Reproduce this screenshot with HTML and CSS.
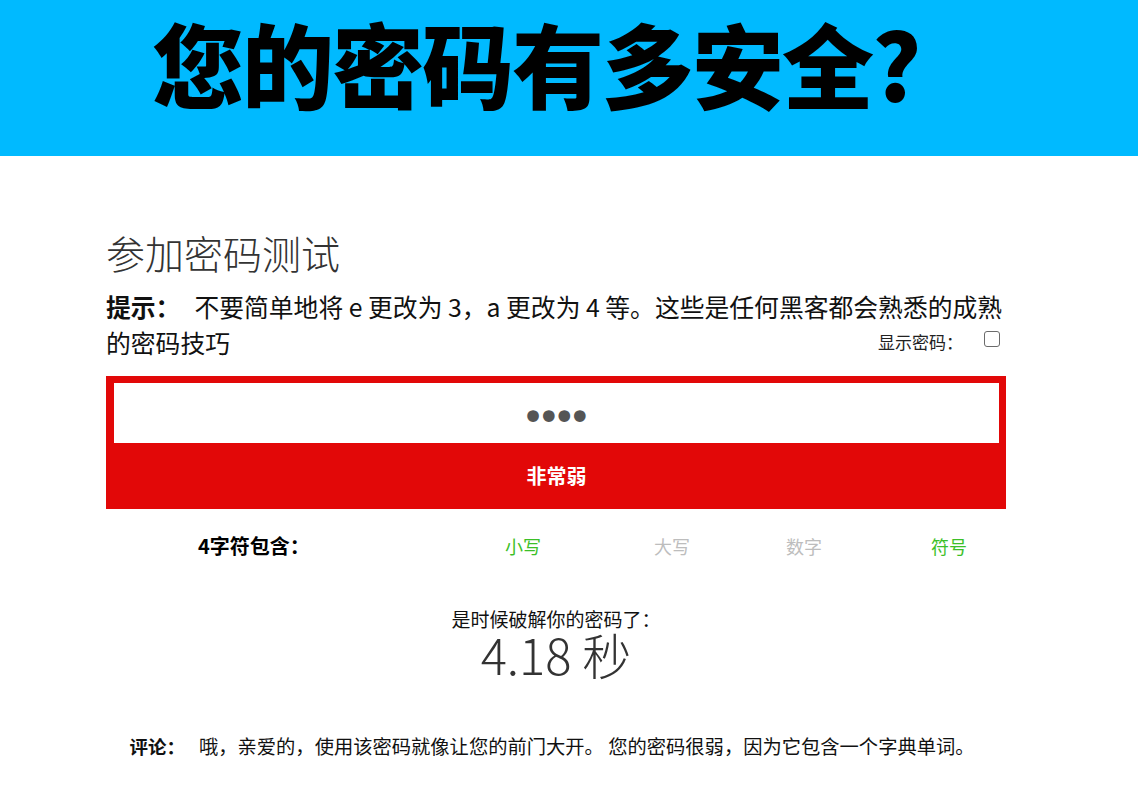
FILE: index.html
```html
<!DOCTYPE html>
<html lang="zh-CN">
<head>
<meta charset="utf-8">
<title>您的密码有多安全？</title>
<link rel="stylesheet" href="styles.css">
</head>
<body>
<header class="banner">
  <h1 class="banner-title">您的密码有多安全?</h1>
</header>
<main class="main">
  <h2 class="test-title">参加密码测试</h2>
  <p class="hint"><strong class="hint-label">提示：</strong>不要简单地将 e 更改为 3，a 更改为 4 等。这些是任何黑客都会熟悉的成熟的密码技巧<span class="toggle"><label class="toggle-label" for="show">显示密码：</label><input class="toggle-box" type="checkbox" id="show"></span></p>
  <div class="meter">
    <input class="pw-input" type="password" value="abcd" aria-label="密码">
    <div class="meter-label">非常弱</div>
  </div>
  <div class="chars">
    <span class="chars-label">4字符包含：</span>
    <span class="chars-item on">小写</span>
    <span class="chars-item off">大写</span>
    <span class="chars-item off">数字</span>
    <span class="chars-item on">符号</span>
  </div>
  <div class="crack">
    <div class="crack-label">是时候破解你的密码了：</div>
    <div class="crack-time">4.18 秒</div>
  </div>
  <p class="comment"><strong class="comment-label">评论：</strong>哦，亲爱的，使用该密码就像让您的前门大开。 您的密码很弱，因为它包含一个字典单词。</p>
</main>
</body>
</html>
```
FILE: styles.css
```css
* { box-sizing: border-box; }
body {
  margin: 0;
  background: #fff;
  color: #111;
  font-family: "Noto Sans CJK SC", "Noto Sans", sans-serif;
}
.banner {
  background: #00baff;
  height: 156px;
  padding: 12px 0 0 152px;
}
.banner-title {
  margin: 0;
  font-size: 92px;
  line-height: 100px;
  font-weight: 900;
  color: #000;
  letter-spacing: -2px;
}
.main {
  width: 900px;
  margin: 0 0 0 106px;
}
.test-title {
  margin: 73px 0 0;
  font-size: 39px;
  line-height: 47px;
  font-weight: 300;
  color: #333;
}
.hint {
  margin: 12px 0 0;
  font-size: 24.8px;
  line-height: 36px;
  color: #111;
}
.hint-label {
  font-weight: 700;
  margin-right: 14px;
}
.toggle {
  float: right;
  display: flex;
  align-items: center;
  font-size: 17px;
  line-height: 26px;
  margin: 5px 6px 0 0;
}
.toggle-label { color: #222; }
.toggle-box {
  appearance: none;
  -webkit-appearance: none;
  width: 16px;
  height: 16px;
  margin: 0 0 6px 21px;
  border: 1px solid #6b6b6b;
  border-radius: 3px;
  background: #fff;
}
.meter {
  margin-top: 16px;
  background: #e20808;
  padding: 7px 7px 0 8px;
}
.pw-input {
  display: block;
  width: 100%;
  height: 60px;
  padding: 8px 8px 0 0;
  border: none;
  outline: none;
  background: #fff;
  text-align: center;
  font-family: "DejaVu Sans", sans-serif;
  font-size: 40px;
  letter-spacing: -8px;
  color: #555;
}
.meter-label {
  height: 66px;
  line-height: 66px;
  text-align: center;
  color: #fff;
  font-size: 20px;
  font-weight: 700;
}
.chars {
  margin-top: 23px;
  padding-left: 92px;
  display: grid;
  grid-template-columns: 307px 149px 132px 145px auto;
  align-items: center;
  font-size: 18px;
  line-height: 28px;
}
.chars-label { font-weight: 700; color: #000; font-size: 20px; }
.chars-item.on { color: #3cbf28; }
.chars-item.off { color: #bdbdbd; }
.crack {
  margin-top: 48px;
  text-align: center;
}
.crack-label {
  font-size: 19px;
  line-height: 22px;
  color: #111;
}
.crack-time {
  font-size: 49px;
  line-height: 48px;
  font-weight: 300;
  color: #333;
}
.comment {
  margin: 54px 0 0;
  text-align: center;
  font-size: 19.3px;
  line-height: 28px;
  color: #111;
  padding-right: 8px;
}
.comment-label {
  font-weight: 700;
  font-size: 18.5px;
  margin-right: 14px;
}
```
